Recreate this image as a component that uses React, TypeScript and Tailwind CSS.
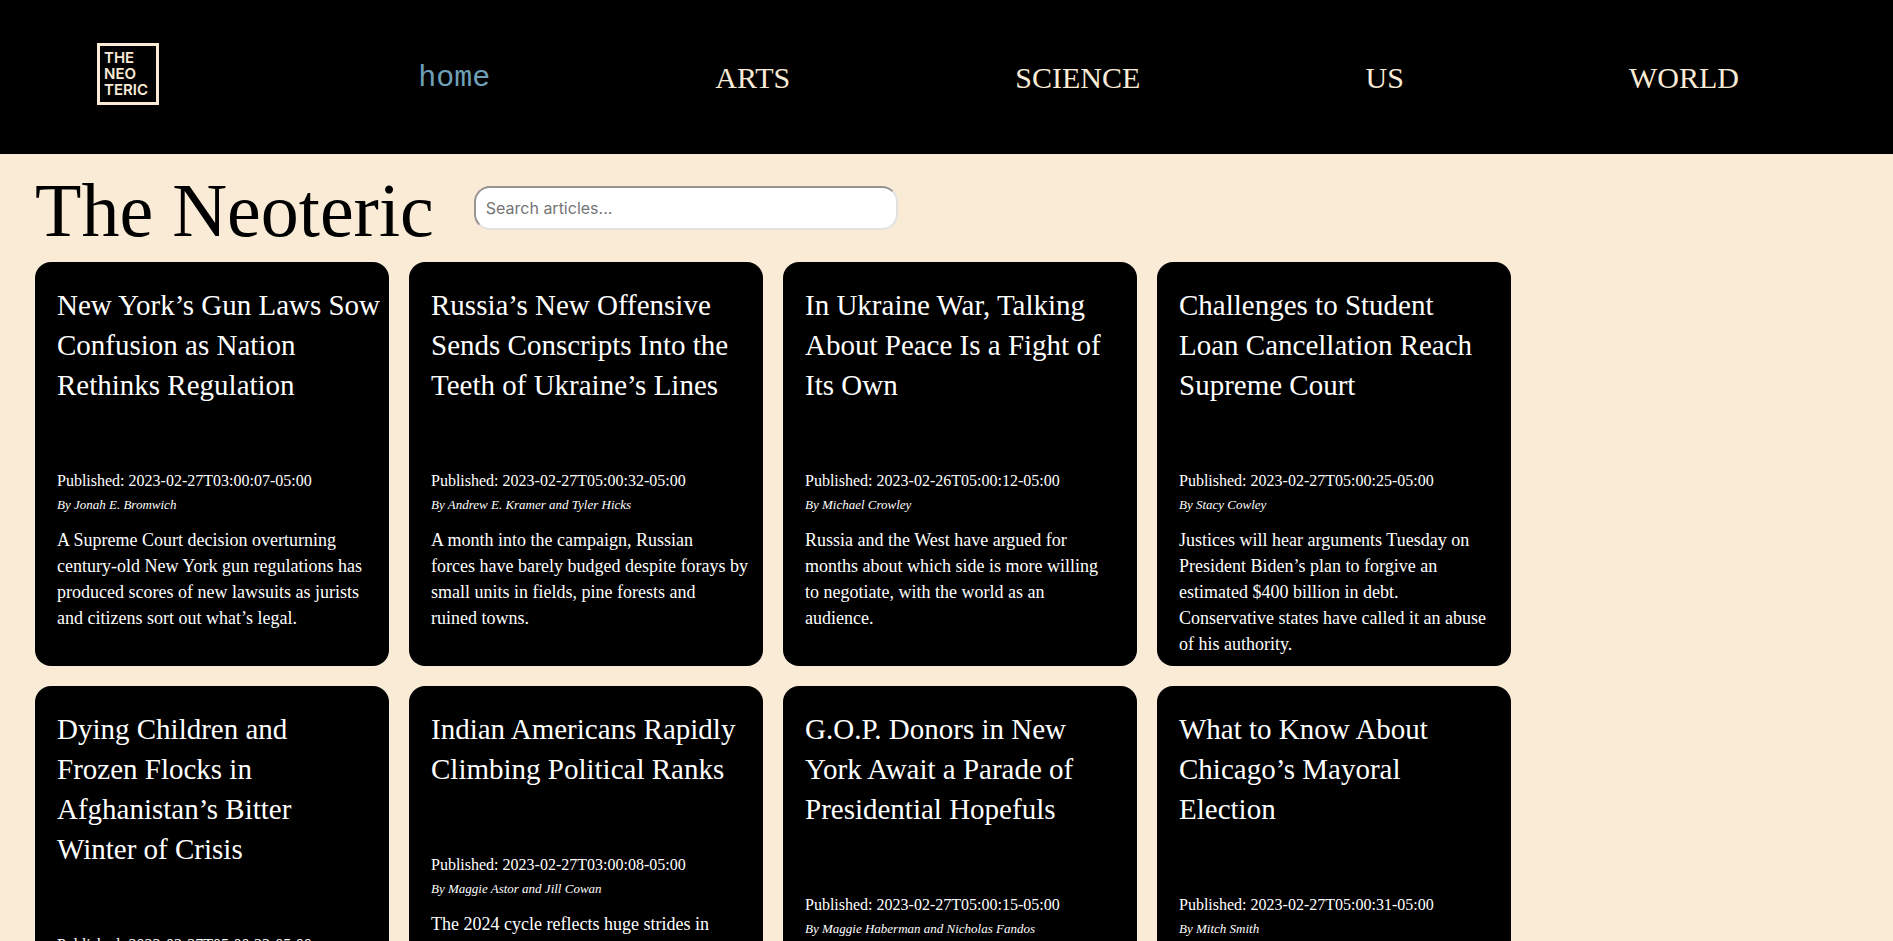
import { useState } from "react";

type Article = {
  title: string;
  published: string;
  byline?: string;
  summary?: string;
};

const articles: Article[] = [
  {
    title: "New York’s Gun Laws Sow\nConfusion as Nation\nRethinks Regulation",
    published: "2023-02-27T03:00:07-05:00",
    byline: "By Jonah E. Bromwich",
    summary:
      "A Supreme Court decision overturning\ncentury-old New York gun regulations has\nproduced scores of new lawsuits as jurists\nand citizens sort out what’s legal.",
  },
  {
    title: "Russia’s New Offensive\nSends Conscripts Into the\nTeeth of Ukraine’s Lines",
    published: "2023-02-27T05:00:32-05:00",
    byline: "By Andrew E. Kramer and Tyler Hicks",
    summary:
      "A month into the campaign, Russian\nforces have barely budged despite forays by\nsmall units in fields, pine forests and\nruined towns.",
  },
  {
    title: "In Ukraine War, Talking\nAbout Peace Is a Fight of\nIts Own",
    published: "2023-02-26T05:00:12-05:00",
    byline: "By Michael Crowley",
    summary:
      "Russia and the West have argued for\nmonths about which side is more willing\nto negotiate, with the world as an\naudience.",
  },
  {
    title: "Challenges to Student\nLoan Cancellation Reach\nSupreme Court",
    published: "2023-02-27T05:00:25-05:00",
    byline: "By Stacy Cowley",
    summary:
      "Justices will hear arguments Tuesday on\nPresident Biden’s plan to forgive an\nestimated $400 billion in debt.\nConservative states have called it an abuse\nof his authority.",
  },
  {
    title: "Dying Children and\nFrozen Flocks in\nAfghanistan’s Bitter\nWinter of Crisis",
    published: "2023-02-27T05:00:23-05:00",
  },
  {
    title: "Indian Americans Rapidly\nClimbing Political Ranks",
    published: "2023-02-27T03:00:08-05:00",
    byline: "By Maggie Astor and Jill Cowan",
    summary: "The 2024 cycle reflects huge strides in",
  },
  {
    title: "G.O.P. Donors in New\nYork Await a Parade of\nPresidential Hopefuls",
    published: "2023-02-27T05:00:15-05:00",
    byline: "By Maggie Haberman and Nicholas Fandos",
  },
  {
    title: "What to Know About\nChicago’s Mayoral\nElection",
    published: "2023-02-27T05:00:31-05:00",
    byline: "By Mitch Smith",
  },
];

const sections = ["ARTS", "SCIENCE", "US", "WORLD"];

function Logo() {
  return (
    <a href="#" className="flex w-[130px] justify-center">
      <span className="flex size-[62px] flex-col justify-center border-[3px] border-[#faebd7] pl-1 font-['Inter',sans-serif] text-[15px] leading-4 font-semibold text-[#faebd7]">
        <span>THE</span>
        <span>NEO</span>
        <span>TERIC</span>
      </span>
    </a>
  );
}

function ArticleCard({ article }: { article: Article }) {
  return (
    <article className="min-h-[404px] rounded-2xl bg-black pt-[23px] pl-[22px] text-white">
      <h2 className="text-[29px] leading-10 whitespace-pre-line">{article.title}</h2>
      <p className="mt-16 text-base leading-6">Published: {article.published}</p>
      {article.byline && <p className="text-[13px] leading-6 italic">{article.byline}</p>}
      {article.summary && (
        <p className="mt-2.5 text-lg leading-[26px] whitespace-pre-line">{article.summary}</p>
      )}
    </article>
  );
}

export default function App() {
  const [query, setQuery] = useState("");
  const shown = articles.filter((a) =>
    a.title.replace(/\n/g, " ").toLowerCase().includes(query.toLowerCase()),
  );

  return (
    <div className="h-screen overflow-y-auto bg-[#faebd7] font-['Liberation_Serif',serif] [scrollbar-width:none]">
      <header className="bg-black">
        <nav className="flex h-[154px] items-center justify-between pr-[154px] pb-1.5 pl-[63px] text-3xl text-[#faebd7]">
          <Logo />
          <a href="#" className="pt-2 font-['Liberation_Mono',monospace] text-[#6f9fb9]">
            home
          </a>
          {sections.map((name) => (
            <a key={name} href={"#" + name.toLowerCase()} className="pt-2">
              {name}
            </a>
          ))}
        </nav>
      </header>
      <main className="px-[35px]">
        <div className="flex h-[108px] items-center gap-10">
          <h1 className="pt-1 text-[76px] leading-none">The Neoteric</h1>
          <input
            type="text"
            aria-label="Search articles"
            placeholder="Search articles..."
            value={query}
            onChange={(e) => setQuery(e.target.value)}
            className="h-11 w-[424px] rounded-2xl border-2 border-t-[#949494] border-r-[#e2e2e2] border-b-[#e2e2e2] border-l-[#949494] bg-white px-2.5 font-['Inter',sans-serif] text-base text-black placeholder:text-[#757575]"
          />
        </div>
        <section className="grid grid-cols-[repeat(auto-fill,354px)] gap-5 pr-[300px]">
          {shown.map((article) => (
            <ArticleCard key={article.title} article={article} />
          ))}
        </section>
      </main>
    </div>
  );
}
